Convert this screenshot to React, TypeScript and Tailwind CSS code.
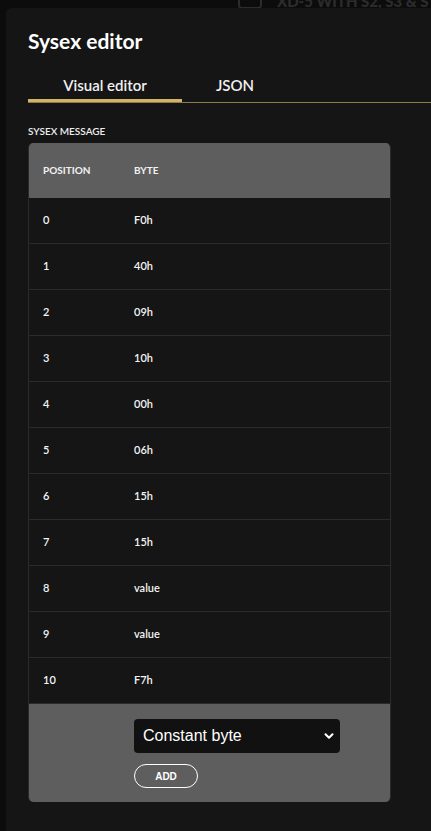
import { ChevronDown } from 'lucide-react';

const rows = ['F0h', '40h', '09h', '10h', '00h', '06h', '15h', '15h', 'value', 'value', 'F7h'];

export default function App() {
  return (
    <div className="h-[831px] w-[431px] overflow-hidden bg-[#0c0c0c] font-['Lato',sans-serif] text-white">
      {/* page behind the modal */}
      <div className="h-2 overflow-hidden">
        <div className="ml-[238px] -mt-[8px] flex items-center whitespace-nowrap text-[#2c2c2c]">
          <div className="h-[16px] w-[24px] shrink-0 rounded-sm border-2 border-[#2c2c2c]" />
          <span className="ml-[15px] text-[15px] font-black leading-[18px]">XD-5 WITH S2, S3 &amp; S</span>
        </div>
      </div>

      <div className="ml-[6px] h-[823px] rounded-tl-md bg-[#151515] pl-[22px] pt-[19px]">
        <h1 className="text-[21px] font-bold leading-[28px]">Sysex editor</h1>

        <div className="mt-[20px] flex border-b border-[#8c7a4c]">
          <div className="flex h-[27px] w-[154px] items-start justify-center border-b-[3px] border-[#d2b466] text-[15px] font-semibold leading-[20px] text-[#f0f0f0]">
            Visual editor
          </div>
          <div className="flex h-[27px] w-[106px] items-start justify-center text-[15px] font-semibold leading-[20px] text-[#f0f0f0]">
            JSON
          </div>
        </div>

        <div className="mt-[22px] text-[10px] font-semibold leading-[12px] text-[#eeeeee]">SYSEX MESSAGE</div>

        <div className="mt-[6px] w-[363px] overflow-hidden rounded-[5px] border-x border-[#2b2b2b]">
          <div className="flex h-[55px] items-center bg-[#5e5e5e] text-[10px] font-bold text-[#f2f2f2]">
            <div className="w-[105px] pl-[14px]">POSITION</div>
            <div>BYTE</div>
          </div>
          {rows.map((b, i) => (
            <div key={i} className="flex h-[46px] items-center border-b border-[#2b2b2b] bg-[#151515] text-[11px] font-semibold text-[#f4f4f4]">
              <div className="w-[105px] pl-[14px]">{i}</div>
              <div>{b}</div>
            </div>
          ))}
          <div className="h-[98px] bg-[#5e5e5e] pl-[105px] pt-[15px]">
            <div className="flex h-[34px] w-[206px] items-center justify-between rounded-[4px] bg-[#111111] pl-[9px] pr-[4px] font-['Liberation_Sans',sans-serif] text-[16px] text-white">
              <span>Constant byte</span>
              <ChevronDown size={14} strokeWidth={3.5} />
            </div>
            <button className="mt-[11px] flex h-[24px] w-[64px] items-center justify-center rounded-full border border-white font-['Liberation_Sans',sans-serif] text-[10px] font-bold text-white">
              ADD
            </button>
          </div>
        </div>
      </div>
    </div>
  );
}
